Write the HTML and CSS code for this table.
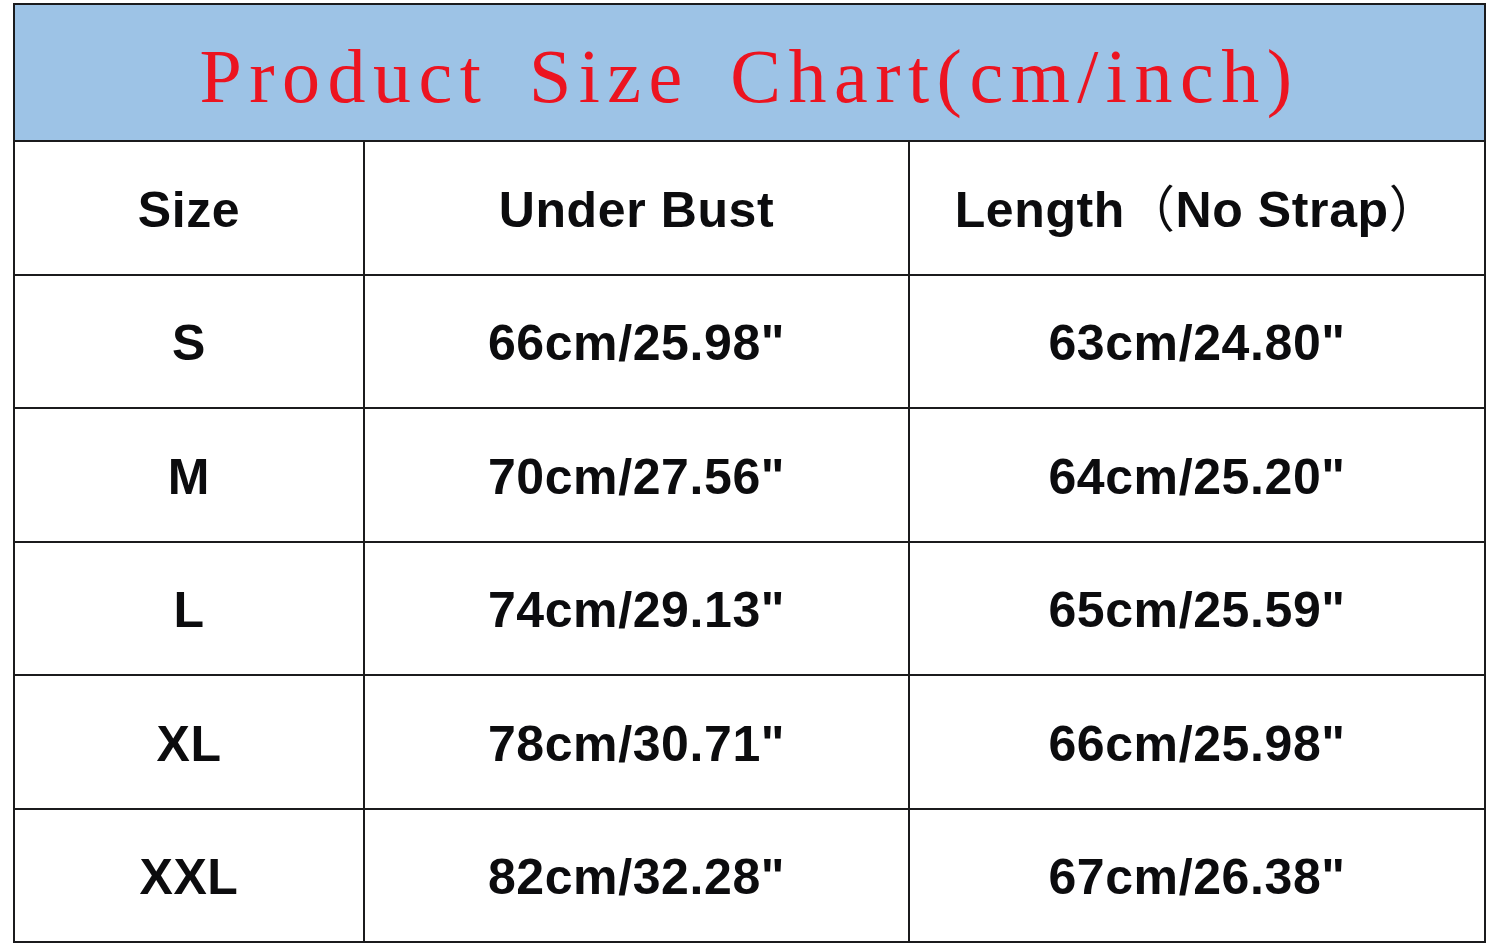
FILE: index.html
```html
<!DOCTYPE html>
<html lang="en">
<head>
<meta charset="utf-8">
<title>Product Size Chart</title>
<link rel="stylesheet" href="styles.css">
</head>
<body>
<div class="page">
  <div class="chart">
    <div class="title"><span class="title-text">Product Size Chart(cm/inch)</span></div>

    <div class="cell"><span class="t">Size</span></div>
    <div class="cell"><span class="t">Under Bust</span></div>
    <div class="cell"><span class="t">Length<span class="cjk">（</span>No Strap<span class="cjk">）</span></span></div>

    <div class="cell"><span class="t">S</span></div>
    <div class="cell"><span class="t">66cm/25.98"</span></div>
    <div class="cell"><span class="t">63cm/24.80"</span></div>

    <div class="cell"><span class="t">M</span></div>
    <div class="cell"><span class="t">70cm/27.56"</span></div>
    <div class="cell"><span class="t">64cm/25.20"</span></div>

    <div class="cell"><span class="t">L</span></div>
    <div class="cell"><span class="t">74cm/29.13"</span></div>
    <div class="cell"><span class="t">65cm/25.59"</span></div>

    <div class="cell"><span class="t">XL</span></div>
    <div class="cell"><span class="t">78cm/30.71"</span></div>
    <div class="cell"><span class="t">66cm/25.98"</span></div>

    <div class="cell"><span class="t">XXL</span></div>
    <div class="cell"><span class="t">82cm/32.28"</span></div>
    <div class="cell"><span class="t">67cm/26.38"</span></div>
  </div>
</div>
</body>
</html>
```

FILE: styles.css
```css
html, body {
  margin: 0;
  padding: 0;
  background: #ffffff;
}

.page {
  padding: 3px 0 0 13px;
}

.chart {
  width: 1473px;
  height: 940px;
  box-sizing: border-box;
  display: grid;
  grid-template-columns: 348px 543px 574px;
  grid-template-rows: 135px repeat(6, 1fr);
  gap: 2px;
  padding: 2px;
  background: #1b1b1d;
}

.title {
  grid-column: 1 / 4;
  background: #9dc3e6;
  display: flex;
  align-items: center;
  justify-content: center;
  padding-top: 8px;
  box-sizing: border-box;
}

.title-text {
  font-family: "Liberation Serif", "Times New Roman", serif;
  font-size: 76px;
  font-weight: normal;
  color: #ec1420;
  letter-spacing: 7.5px;
  word-spacing: 14px;
  white-space: nowrap;
}

.cell {
  background: #ffffff;
  display: flex;
  align-items: center;
  justify-content: center;
}

.t {
  display: inline-block;
  font-family: "Liberation Sans", Arial, "Noto Sans CJK SC", sans-serif;
  font-weight: bold;
  font-size: 50px;
  line-height: 58px;
  letter-spacing: 0.6px;
  color: #0c0c0e;
  white-space: nowrap;
  padding-top: 4px;
}

.cjk {
  font-family: "Noto Sans CJK SC", sans-serif;
  font-weight: normal;
  font-size: 50px;
  line-height: 0;
}
```
